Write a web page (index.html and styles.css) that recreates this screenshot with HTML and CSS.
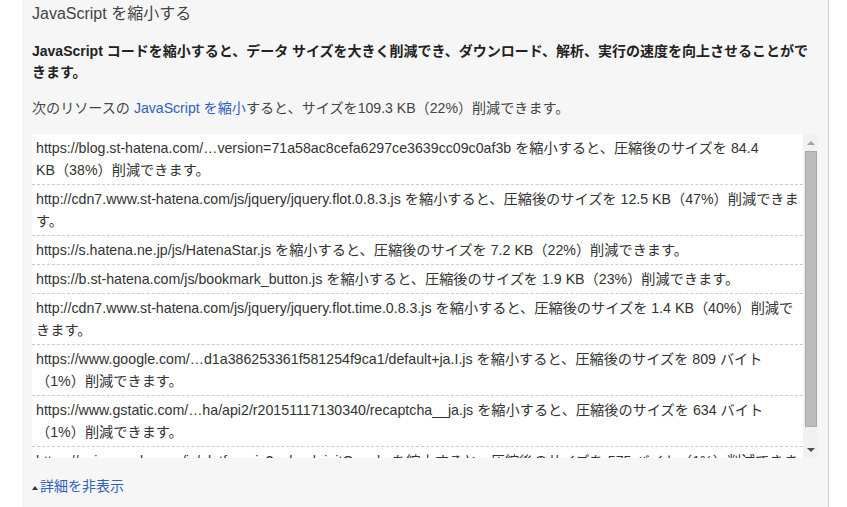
FILE: index.html
```
<!DOCTYPE html>
<html lang="ja">
<head>
<meta charset="utf-8">
<title>JavaScript を縮小する</title>
<link rel="stylesheet" href="styles.css">
</head>
<body>
<div class="panel">
  <h3 class="title">JavaScript を縮小する</h3>
  <p class="summary">JavaScript コードを縮小すると、データ サイズを大きく削減でき、ダウンロード、解析、実行の速度を向上させることができます。</p>
  <p class="lead">次のリソースの <a class="link" href="#">JavaScript を縮小</a>すると、サイズを109.3 KB（22%）削減できます。</p>
  <div class="scrollbox">
    <ul class="rows">
      <li class="row">https://blog.st-hatena.com/…version=71a58ac8cefa6297ce3639cc09c0af3b を縮小すると、圧縮後のサイズを 84.4 <span class="nw">KB（38%）</span>削減できます。</li>
      <li class="row">http://cdn7.www.st-hatena.com/js/jquery/jquery.flot.0.8.3.js を縮小すると、圧縮後のサイズを 12.5 KB（47%）削減できます。</li>
      <li class="row">https://s.hatena.ne.jp/js/HatenaStar.js を縮小すると、圧縮後のサイズを 7.2 KB（22%）削減できます。</li>
      <li class="row">https://b.st-hatena.com/js/bookmark_button.js を縮小すると、圧縮後のサイズを 1.9 KB（23%）削減できます。</li>
      <li class="row">http://cdn7.www.st-hatena.com/js/jquery/jquery.flot.time.0.8.3.js を縮小すると、圧縮後のサイズを 1.4 KB（40%）削減できます。</li>
      <li class="row">https://www.google.com/…d1a386253361f581254f9ca1/default+ja.I.js を縮小すると、圧縮後のサイズを 809 バイト（1%）削減できます。</li>
      <li class="row">https://www.gstatic.com/…ha/api2/r20151117130340/recaptcha__ja.js を縮小すると、圧縮後のサイズを 634 バイト（1%）削減できます。</li>
      <li class="row">https://apis.google.com/js/platform.js?onload=initGoogle を縮小すると、圧縮後のサイズを 575 バイト（1%）削減できます。</li>
    </ul>
    <div class="scrollbar">
      <div class="arrow arrow-up"></div>
      <div class="track"><div class="thumb"></div></div>
      <div class="arrow arrow-down"></div>
    </div>
  </div>
  <p class="toggle"><span class="tri"></span><a class="link" href="#">詳細を非表示</a></p>
</div>
</body>
</html>
```
FILE: styles.css
```
html, body {
  margin: 0;
  padding: 0;
  background: #ffffff;
}
body {
  font-family: "Liberation Sans", "Noto Sans CJK JP", sans-serif;
  font-size: 14px;
  color: #333333;
}
.panel {
  margin-left: 22px;
  width: 786px;
  height: 507px;
  box-sizing: content-box;
  padding: 0 10px;
  background: #f6f6f6;
  border-right: 1px solid #cfcfcf;
  overflow: hidden;
}
.title {
  margin: 0;
  padding-top: 4px;
  font-size: 16px;
  line-height: 20px;
  font-weight: normal;
  color: #444444;
}
.summary {
  margin: 17px 0 0 0;
  font-weight: bold;
  line-height: 21px;
  color: #222222;
}
.lead {
  margin: 15px 0 0 0;
  font-size: 14.1px;
  line-height: 21px;
  color: #444444;
}
.link {
  color: #2f5fbf;
  text-decoration: none;
}
.scrollbox {
  margin-top: 15px;
  height: 324px;
  display: flex;
  background: #ffffff;
}
.rows {
  list-style: none;
  margin: 0;
  padding: 0;
  flex: 1;
  overflow: hidden;
}
.row {
  padding: 3px 4px;
  font-size: 14.2px;
  line-height: 22px;
  border-bottom: 1px dashed #cccccc;
  color: #333333;
}
.nw {
  white-space: nowrap;
}
.scrollbar {
  width: 15px;
  display: flex;
  flex-direction: column;
  background: #f1f1f1;
}
.arrow {
  height: 17px;
  display: flex;
  align-items: center;
  justify-content: center;
}
.arrow::before {
  content: "";
  width: 0;
  height: 0;
  border-left: 4px solid transparent;
  border-right: 4px solid transparent;
}
.arrow-up::before {
  border-bottom: 4px solid #a3a3a3;
}
.arrow-down::before {
  border-top: 4px solid #505050;
}
.track {
  flex: 1;
  padding: 0 1px 0 2px;
}
.thumb {
  height: 276px;
  background: #bcbcbc;
  border: 1px solid #a8a8a8;
  box-sizing: border-box;
}
.toggle {
  margin: 18px 0 0 0;
  line-height: 21px;
  display: flex;
  align-items: center;
}
.tri {
  width: 0;
  height: 0;
  border-left: 3px solid transparent;
  border-right: 3px solid transparent;
  border-bottom: 4px solid #333333;
  margin-right: 2px;
  margin-top: 3px;
}
```
